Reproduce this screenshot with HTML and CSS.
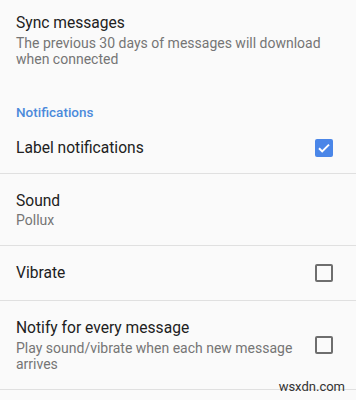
FILE: index.html
```html
<!DOCTYPE html>
<html lang="en">
<head>
    <meta charset="UTF-8">
    <meta name="viewport" content="width=device-width, initial-scale=1.0">
    <title>Notification settings</title>
    <link rel="stylesheet" href="styles.css">
</head>

<body>
    <div class="item two first">
        <div class="text">
            <div class="title">Sync messages</div>
            <div class="summary">The previous 30 days of messages will download when connected</div>
        </div>
    </div>

    <div class="header">Notifications</div>

    <div class="item single">
        <div class="text">
            <div class="title">Label notifications</div>
        </div>
        <span class="check checked">
            <svg viewBox="0 0 18 18" width="18" height="18"><path d="M4 9.2l3.2 3.2L14 5.6" fill="none" stroke="#fff" stroke-width="2"/></svg>
        </span>
    </div>

    <div class="item two">
        <div class="text">
            <div class="title">Sound</div>
            <div class="summary tight">Pollux</div>
        </div>
    </div>

    <div class="item single tall">
        <div class="text">
            <div class="title">Vibrate</div>
        </div>
        <span class="check"></span>
    </div>

    <div class="item two">
        <div class="text">
            <div class="title">Notify for every message</div>
            <div class="summary">Play sound/vibrate when each new message arrives</div>
        </div>
        <span class="check"></span>
    </div>

    <div class="watermark">wsxdn.com</div>
</body>
</html>
```

FILE: styles.css
```css
body {
    margin: 0;
    background-color: #fafafa;
    font-family: Roboto, "Noto Sans", sans-serif;
    color: #212121;
    position: relative;
    height: 400px;
    overflow: hidden;
}

.item {
    display: flex;
    align-items: center;
    padding: 0 16px;
    border-bottom: 1px solid #e0e0e0;
}

.item.two {
    padding-top: 17px;
    padding-bottom: 17px;
}

.item.first {
    padding-top: 13px;
    border-bottom: none;
}

.item.single {
    height: 51px;
}

.item.single.tall {
    height: 54px;
}

.text {
    flex: 1;
}

.title {
    font-size: 15.6px;
    line-height: 20px;
}

.summary {
    font-size: 14px;
    line-height: 16px;
    color: #757575;
    margin-top: 2px;
    padding-right: 20px;
}

.summary.tight {
    margin-top: 1px;
}

.first .summary {
    padding-right: 0;
}

.header {
    font-size: 13.5px;
    font-weight: 500;
    line-height: 16px;
    color: #4c8ada;
    padding: 20px 16px 2px;
}

/* checkbox */
.check {
    width: 18px;
    height: 18px;
    box-sizing: border-box;
    border: 2px solid #6e6e6e;
    border-radius: 2px;
    margin-right: 7px;
    flex-shrink: 0;
}

.check.checked {
    border: none;
    background-color: #4a86e8;
}

.check svg {
    display: block;
}

.watermark {
    position: absolute;
    right: 11px;
    bottom: 6px;
    font-size: 13px;
    color: #333;
}
```
